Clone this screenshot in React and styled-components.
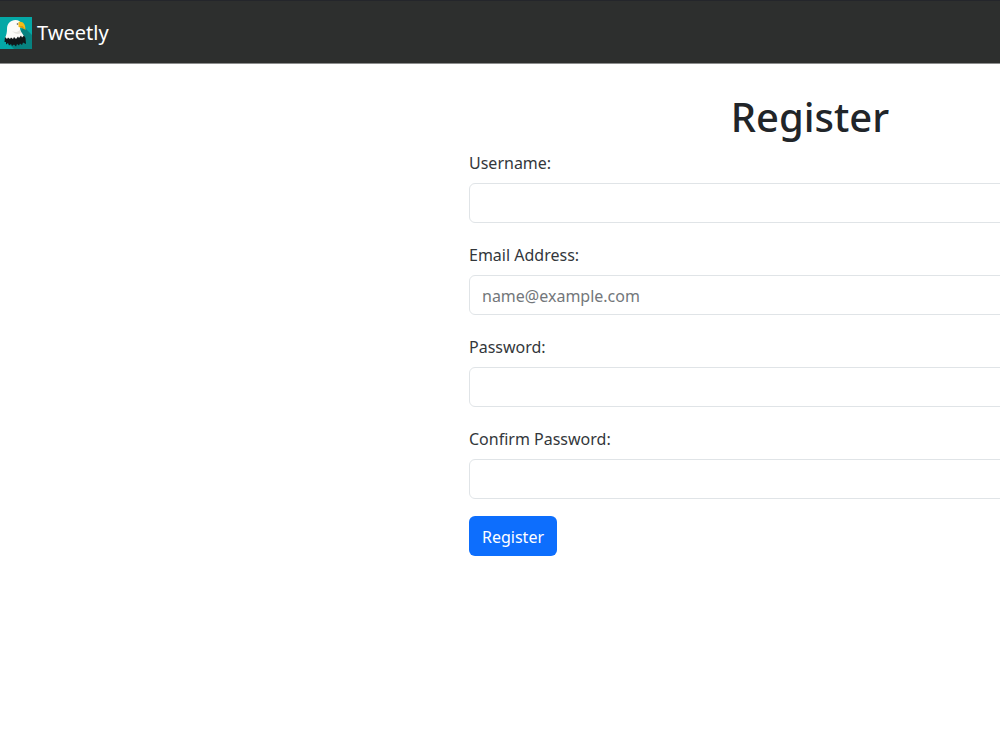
import React, {useState} from 'react'
import styled, {createGlobalStyle} from 'styled-components'


const GlobalStyle = createGlobalStyle`

* {
    box-sizing: border-box;
}

body {
    margin: 0;
    background-color: #ffffff;
    color: #212529;
    font-family: "Noto Sans", "Open Sans", sans-serif;
    font-size: 16px;
    line-height: 30px;
}

`

const Page = styled.div`
    min-height: 100vh;
    overflow-x: hidden;
`

const Navbar = styled.nav`
    display: flex;
    align-items: center;
    height: 64px;
    border-top: 1px solid #24262b;
    border-bottom: 1px solid #8c8d8d;
    background-color: #2d2f2e;
`

const Brand = styled.a`
    display: flex;
    align-items: center;
    gap: 5px;
    padding-top: 2px;
    color: #ffffff;
    font-size: 20px;
    line-height: 32px;
    text-decoration: none;
`

const Logo = styled.svg`
    width: 32px;
    height: 32px;
`

/* wider than the window, the form is centered in it */
const Main = styled.main`
    display: flex;
    justify-content: center;
    width: 162%;
    padding-top: 27px;
`

const Form = styled.form`
    width: 682px;
`

const Title = styled.h1`
    margin: 0 0 6px;
    font-size: 40px;
    font-weight: 500;
    line-height: 51px;
    text-align: center;
`

const Field = styled.div`
    display: flex;
    flex-direction: column;
    gap: 5px;
    margin-bottom: 17px;
`

const Label = styled.label`
    color: #33373b;
`

const Input = styled.input`
    width: 100%;
    height: 40px;
    padding: 6px 12px 4px;
    border: 1px solid #e0e4e7;
    border-radius: 6px;
    background-color: #ffffff;
    color: #212529;
    font: inherit;

    &::placeholder {
        color: #73777b;
        opacity: 1;
    }

    &:focus {
        outline: none;
        border-color: #86b7fe;
    }
`

const Button = styled.button`
    height: 40px;
    padding: 2px 13px 0;
    border: 0;
    border-radius: 6px;
    background-color: #0d6efd;
    color: #ffffff;
    font: inherit;
    cursor: pointer;
`

const fields = [
    {id: 'username', label: 'Username:', type: 'text'},
    {id: 'email', label: 'Email Address:', type: 'email', placeholder: 'name@example.com'},
    {id: 'password', label: 'Password:', type: 'password'},
    {id: 'confirm', label: 'Confirm Password:', type: 'password'},
]

function EagleLogo() {
    return (
        <Logo viewBox="0 0 32 32" aria-hidden="true">
            <rect width="32" height="32" fill="#04a8a6"/>
            <path d="M24 10 L32 18 V32 H14 L8 26 Z" fill="#078280"/>
            <path
                d="M7 12 C7 6.500 10.500 3 15.500 3 C18.500 3 20.500 4.500 21.500 7 L20 11 C20 15 24 17 25 22 L22 24 L7 24 L5 21 C6.500 18 7 15 7 12 Z"
                fill="#fbfbf8"/>
            <path d="M12 14 C15 16 18 15 20 13 L21 16 C18 18 15 17 12 14 Z" fill="#e6e5df"/>
            <path
                d="M5 20 L7 22 L8 20.500 L10 22 L11 20.500 L13 22 L14 20 L16 22 L18 19.500 L19 21 L21 18.500 L22 20.500 L24 18.500 L25.500 21 L26 27 L23 25.500 L22 28 L20 26.500 L19 28.500 L17 27 L16 29.500 L14 27.500 L12 29 L11 27 L9 28.500 L8 26 L6 27.500 L6 25 L4.500 25 Z"
                fill="#111719"/>
            <path d="M18.500 5 C23 4 25.500 7 25.500 13 C23.500 10.800 21 10.800 18.500 10 Z" fill="#f5bd18"/>
            <path d="M19 9.300 L22.500 9 L25 12 L22 11 Z" fill="#d99412"/>
            <circle cx="17.500" cy="7" r="0.800" fill="#4b4a3e"/>
        </Logo>
    )
}

export default function App() {
    const [values, setValues] = useState({})

    const handleChange = (e) => {
        setValues({...values, [e.target.id]: e.target.value})
    }

    return (
        <Page>
            <GlobalStyle/>
            <Navbar>
                <Brand href="/">
                    <EagleLogo/>
                    Tweetly
                </Brand>
            </Navbar>
            <Main>
                <Form onSubmit={(e) => e.preventDefault()}>
                    <Title>Register</Title>
                    {fields.map((field) => (
                        <Field key={field.id}>
                            <Label htmlFor={field.id}>{field.label}</Label>
                            <Input
                                id={field.id}
                                type={field.type}
                                placeholder={field.placeholder}
                                value={values[field.id] || ''}
                                onChange={handleChange}/>
                        </Field>
                    ))}
                    <Button type="submit">Register</Button>
                </Form>
            </Main>
        </Page>
    )
}
